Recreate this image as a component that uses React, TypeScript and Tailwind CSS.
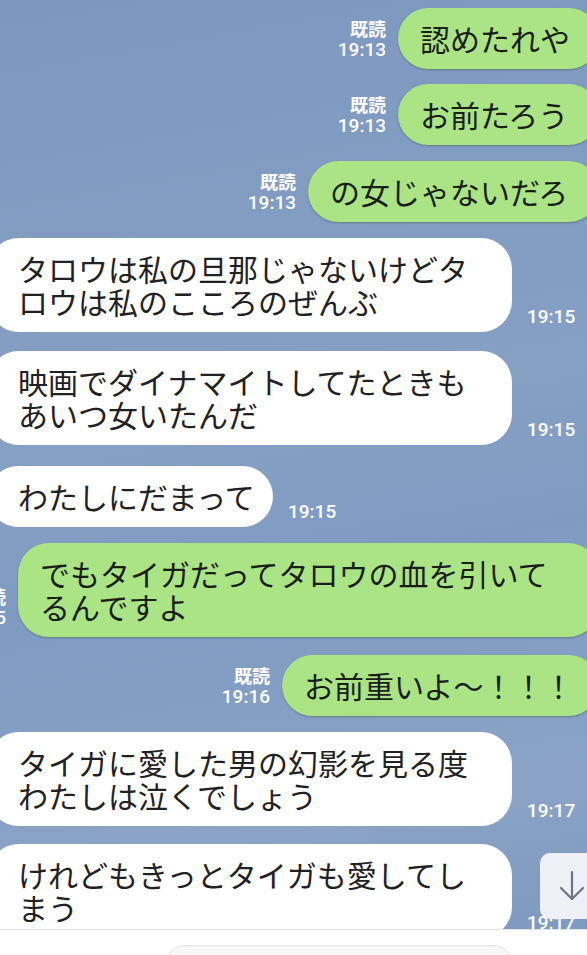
type Msg = {
  kind: 'me' | 'them';
  lines: string[];
  time: string;
  width: number;
  mt: number;
};

const messages: Msg[] = [
  { kind: 'me', lines: ['認めたれや'], time: '19:13', width: 201, mt: 8 },
  { kind: 'me', lines: ['お前たろう'], time: '19:13', width: 201, mt: 15 },
  { kind: 'me', lines: ['の女じゃないだろ'], time: '19:13', width: 291, mt: 16 },
  { kind: 'them', lines: ['タロウは私の旦那じゃないけどタ', 'ロウは私のこころのぜんぶ'], time: '19:15', width: 524, mt: 16 },
  { kind: 'them', lines: ['映画でダイナマイトしてたときも', 'あいつ女いたんだ'], time: '19:15', width: 524, mt: 19 },
  { kind: 'them', lines: ['わたしにだまって'], time: '19:15', width: 285, mt: 21 },
  { kind: 'me', lines: ['でもタイガだってタロウの血を引いて', 'るんですよ'], time: '19:15', width: 581, mt: 16 },
  { kind: 'me', lines: ['お前重いよ〜！！！'], time: '19:16', width: 317, mt: 18 },
  { kind: 'them', lines: ['タイガに愛した男の幻影を見る度', 'わたしは泣くでしょう'], time: '19:17', width: 524, mt: 16 },
  { kind: 'them', lines: ['けれどもきっとタイガも愛してし', 'まう'], time: '19:17', width: 524, mt: 18 },
];

function MyBubble({ m }: { m: Msg }) {
  return (
    <div className="flex items-end justify-end -mr-[12px]" style={{ marginTop: m.mt }}>
      <div className="mb-[8px] mr-[12px] flex flex-col items-end text-[19px] leading-[22px] font-medium text-white font-['Roboto','Noto_Sans',sans-serif]">
        <span className="text-[18px] font-bold font-['Noto_Sans_CJK_JP',sans-serif]">既読</span>
        <span>{m.time}</span>
      </div>
      <div
        className="shrink-0 rounded-[31px] bg-[#aae485] pl-[22px] pr-[31px] py-[14px] text-[30px] leading-[33px] text-[#1b1d1a] shadow-[0_1px_2px_rgba(40,60,20,0.35)] whitespace-nowrap font-['Noto_Sans_CJK_JP','Noto_Sans',sans-serif]"
        style={{ width: m.width }}
      >
        {m.lines.map((l, i) => (
          <div key={i}>{l}</div>
        ))}
      </div>
    </div>
  );
}

function TheirBubble({ m }: { m: Msg }) {
  return (
    <div className="flex items-end -ml-[12px]" style={{ marginTop: m.mt }}>
      <div
        className="shrink-0 rounded-[31px] bg-white pl-[30px] pr-[16px] py-[14px] text-[30px] leading-[33px] text-[#1f2124] whitespace-nowrap font-['Noto_Sans_CJK_JP','Noto_Sans',sans-serif]"
        style={{ width: m.width }}
      >
        {m.lines.map((l, i) => (
          <div key={i}>{l}</div>
        ))}
      </div>
      <div className="mb-[4px] ml-[15px] text-[19px] leading-[22px] font-medium text-white font-['Roboto','Noto_Sans',sans-serif]">
        {m.time}
      </div>
    </div>
  );
}

export default function App() {
  return (
    <div className="relative flex h-[955px] w-[587px] flex-col overflow-hidden bg-[#7f9ac0]">
      <div className="flex-1 overflow-hidden bg-[linear-gradient(170deg,#7d98bf_0%,#86a0c4_45%,#7f9bc1_60%,#8aa3c6_85%,#7e99bf_100%)]">
        {messages.map((m, i) =>
          m.kind === 'me' ? <MyBubble key={i} m={m} /> : <TheirBubble key={i} m={m} />
        )}
      </div>

      <button className="absolute left-[540px] top-[853px] flex h-[66px] w-[64px] items-center justify-center rounded-[10px] bg-[#eef0f5]">
        <svg width="30" height="34" viewBox="0 0 30 34" fill="none" stroke="#6e7480" strokeWidth="2.2" strokeLinecap="round" strokeLinejoin="round">
          <path d="M15 3v27" />
          <path d="M4 19l11 11 11-11" />
        </svg>
      </button>

      <div className="relative z-10 h-[26px] shrink-0 border-t border-[#e3e5e8] bg-white">
        <div className="absolute left-[165px] top-[15px] h-[40px] w-[348px] rounded-full border border-[#e2e3e6] bg-[#f7f7f8]" />
      </div>
    </div>
  );
}
